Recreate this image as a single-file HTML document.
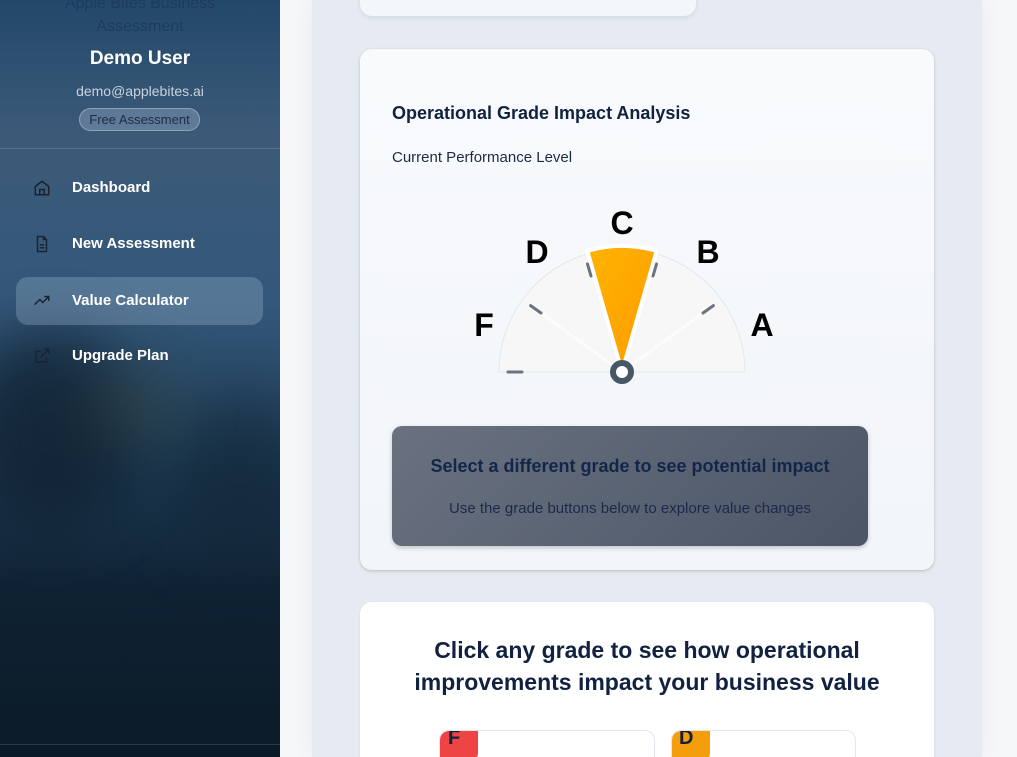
<!DOCTYPE html>
<html style="width:1017px;height:757px;overflow:hidden"><head><meta charset="utf-8"><style>
*{margin:0;padding:0;box-sizing:border-box}
body{width:1017px;height:757px;overflow:hidden;font-family:"Liberation Sans",sans-serif;background:#f6f7f9;position:relative}
.side{position:absolute;left:0;top:0;width:280px;height:757px;background:linear-gradient(180deg,#23486a 0%,#3c5a78 18%,#34587a 40%,#22405a 58%,#0f2233 78%,#0b1a28 100%);overflow:hidden}
.blob{position:absolute;border-radius:50%;filter:blur(30px)}
.side .t{position:absolute;width:280px;text-align:center}
.nav{position:absolute;left:16px;width:247px;height:48px;border-radius:12px;color:#fff;font-weight:bold;font-size:15px;line-height:48px;padding-left:56px}
.nav svg{position:absolute;left:17px;top:15px}
.panel{position:absolute;left:312px;top:0;width:670px;height:757px;background:#e6ebf3;box-shadow:0 0 20px rgba(0,0,0,.06)}
.card{position:absolute;border-radius:12px;overflow:hidden}
</style></head><body>
<div class="side">
<div class="blob" style="left:-40px;top:330px;width:180px;height:200px;background:#0d1d2b;opacity:.7"></div>
<div class="blob" style="left:170px;top:400px;width:140px;height:160px;background:#112536;opacity:.6"></div>
<div class="blob" style="left:90px;top:370px;width:90px;height:70px;background:#3b4a44;opacity:.5"></div>
<div class="t" style="top:-8px;font-size:16px;color:#1e3a5f;line-height:23px">Apple Bites Business<br>Assessment</div>
<div class="t" style="top:48px;font-size:19px;font-weight:bold;color:#fff">Demo User</div>
<div class="t" style="top:83px;font-size:14px;color:#c8d3de">demo@applebites.ai</div>
<div style="position:absolute;left:79px;top:108px;width:121px;height:23px;border:1px solid #8fa3b8;border-radius:12px;background:rgba(140,165,190,.45);color:#1c2e45;font-size:13px;text-align:center;line-height:21px">Free Assessment</div>
<div style="position:absolute;left:0;top:148px;width:280px;height:1px;background:rgba(255,255,255,.15)"></div>
<div class="nav" style="top:164px"><svg width="18" height="18" viewBox="0 0 24 24" fill="none" stroke="#1a2330" stroke-width="2"><path d="M3 10l9-7 9 7v11H3z"/><path d="M9 21v-7h6v7"/></svg>Dashboard</div>
<div class="nav" style="top:220px"><svg width="18" height="18" viewBox="0 0 24 24" fill="none" stroke="#1a2330" stroke-width="2"><path d="M14 2H6v20h12V6z"/><path d="M14 2v4h4M9 13h6M9 17h6"/></svg>New Assessment</div>
<div class="nav" style="top:277px;background:rgba(150,175,200,.35)"><svg width="18" height="18" viewBox="0 0 24 24" fill="none" stroke="#1a2330" stroke-width="2"><path d="M2 17l7-7 4 4 8-8"/><path d="M15 6h6v6"/></svg>Value Calculator</div>
<div class="nav" style="top:332px"><svg width="18" height="18" viewBox="0 0 24 24" fill="none" stroke="#1a2330" stroke-width="2"><path d="M18 13v7H4V6h7"/><path d="M15 3h6v6M10 14L21 3"/></svg>Upgrade Plan</div>
<div style="position:absolute;left:0;top:744px;width:280px;height:1px;background:rgba(255,255,255,.12)"></div>
</div>
<div class="panel"></div>
<div class="card" style="left:360px;top:-20px;width:336px;height:36px;background:#f3f6fa;box-shadow:0 2px 6px rgba(0,0,0,.08)"></div>
<div class="card" style="left:360px;top:49px;width:574px;height:521px;background:linear-gradient(180deg,#f8fafc,#f2f5f9);box-shadow:0 1px 3px rgba(0,0,0,.2)">
<div style="position:absolute;left:32px;top:54px;font-size:18px;font-weight:bold;color:#11213f">Operational Grade Impact Analysis</div>
<div style="position:absolute;left:32px;top:100px;font-size:15px;color:#1c2b45">Current Performance Level</div>
<div style="position:absolute;left:32px;top:377px;width:476px;height:120px;border-radius:10px;background:linear-gradient(135deg,#6a7280,#4b5566);box-shadow:0 2px 5px rgba(0,0,0,.2);text-align:center">
<div style="margin-top:30px;font-size:18px;font-weight:bold;color:#13264a">Select a different grade to see potential impact</div>
<div style="margin-top:23px;font-size:15px;color:#1b2a4a">Use the grade buttons below to explore value changes</div>
</div>
</div>
<svg style="position:absolute;left:0;top:0" width="1017" height="757">
<defs><linearGradient id="o" x1="0" y1="0" x2="1" y2="1"><stop offset="0" stop-color="#ffb400"/><stop offset="1" stop-color="#ff9a00"/></linearGradient></defs>
<path d="M499 372A123 123 0 0 1 745 372Z" fill="#f7f7f7" stroke="#e3e7ee" stroke-width="1"/>
<g stroke="#ffffff" stroke-width="3" opacity=".7"><line x1="622" y1="372" x2="530" y2="305"/><line x1="622" y1="372" x2="714" y2="305"/></g>
<path d="M622 372L587.3 250.9A126 126 0 0 1 656.7 250.9Z" fill="url(#o)" stroke="#fff" stroke-width="4" stroke-linejoin="round"/>
<g stroke="#6b7280" stroke-width="3" stroke-linecap="round"><line x1="508" y1="372" x2="522" y2="372"/><line x1="541" y1="313" x2="530.6" y2="305.6"/><line x1="591" y1="276" x2="587.5" y2="264"/><line x1="653" y1="276" x2="656.5" y2="264"/><line x1="703" y1="313" x2="713.4" y2="305.6"/></g>
<circle cx="622" cy="372" r="9" fill="#fff" stroke="#465866" stroke-width="6"/>
<g font-family="Liberation Sans" font-weight="bold" font-size="32" fill="#000" text-anchor="middle"><text x="484" y="336">F</text><text x="537" y="263">D</text><text x="622" y="234">C</text><text x="708" y="263">B</text><text x="762" y="336">A</text></g>
</svg>
<div class="card" style="left:360px;top:602px;width:574px;height:180px;background:#fff;box-shadow:0 1px 3px rgba(0,0,0,.08)">
<div style="position:absolute;left:0;top:32px;width:574px;text-align:center;font-size:23px;font-weight:bold;color:#11213f;line-height:32px">Click any grade to see how operational<br>improvements impact your business value</div>
<div style="position:absolute;left:79px;top:128px;width:216px;height:60px;border:1px solid #e2e7ef;border-radius:10px;overflow:hidden"><div style="width:38px;height:30px;background:#ef4444;border-radius:0 0 8px 0;color:#11213f;font-weight:bold;font-size:20px;padding-left:8px;line-height:14px">F</div></div>
<div style="position:absolute;left:311px;top:128px;width:185px;height:60px;border:1px solid #e2e7ef;border-radius:10px;overflow:hidden"><div style="width:38px;height:30px;background:#f59e0b;border-radius:0 0 8px 0;color:#11213f;font-weight:bold;font-size:20px;padding-left:7px;line-height:14px">D</div></div>
</div>
</body></html>
